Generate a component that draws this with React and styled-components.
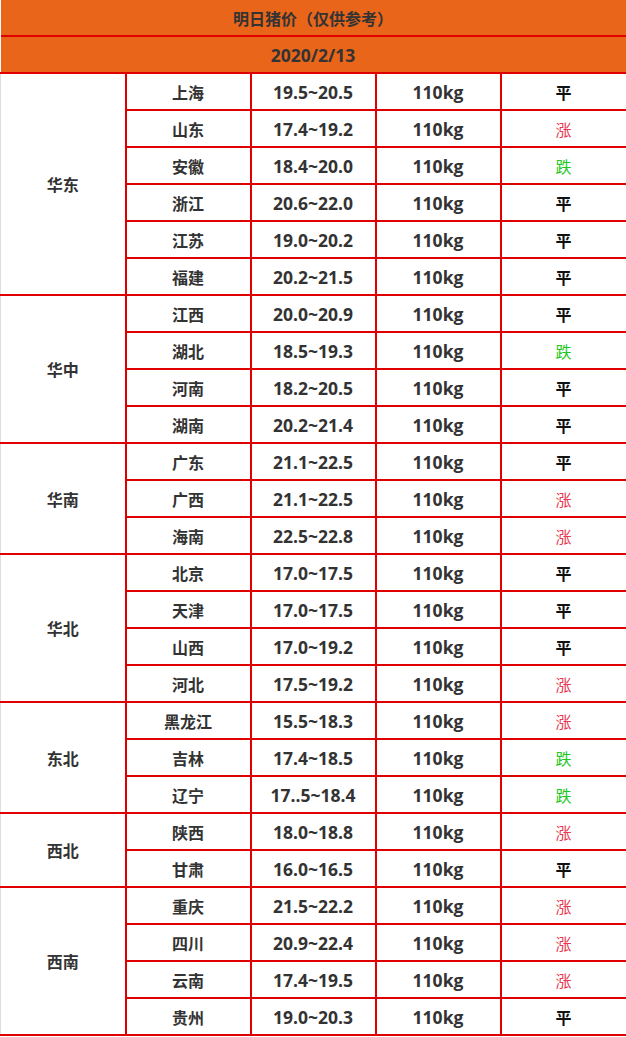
import React from "react";
import styled, { createGlobalStyle } from "styled-components";

const GlobalStyle = createGlobalStyle`
  html, body {
    margin: 0;
    padding: 0;
    background: #fff;
  }
  body {
    font-family: "Open Sans", "Noto Sans CJK SC", sans-serif;
  }
`;

const Table = styled.table`
  width: 626px;
  table-layout: fixed;
  border-collapse: collapse;
  color: #333;
`;

const Col = styled.col`
  width: ${(p) => (p.wide ? "126px" : "125px")};
`;

const HeadCell = styled.th`
  height: 35px;
  padding: 0;
  background: #e9651a;
  border-bottom: 2px solid #e00000;
  border-right: 2px solid #e00000;
  font-size: ${(p) => (p.num ? "17.5px" : "16px")};
  font-weight: 700;
  text-align: center;
  color: #333;
`;

const Cell = styled.td`
  height: 35px;
  padding: 0;
  border: 2px solid #e00000;
  border-left: ${(p) => (p.first ? "1px solid #ddd" : "2px solid #e00000")};
  font-size: ${(p) => (p.num ? "17.5px" : "16px")};
  font-weight: 700;
  text-align: center;
  white-space: nowrap;
`;

const Trend = styled(Cell)`
  font-weight: ${(p) => (p.kind === "平" ? 700 : 400)};
  color: ${(p) =>
    p.kind === "涨" ? "#e8374f" : p.kind === "跌" ? "#1ec81e" : "#111"};
`;

const regions = [
  {
    name: "华东",
    rows: [
      ["上海", "19.5~20.5", "平"],
      ["山东", "17.4~19.2", "涨"],
      ["安徽", "18.4~20.0", "跌"],
      ["浙江", "20.6~22.0", "平"],
      ["江苏", "19.0~20.2", "平"],
      ["福建", "20.2~21.5", "平"],
    ],
  },
  {
    name: "华中",
    rows: [
      ["江西", "20.0~20.9", "平"],
      ["湖北", "18.5~19.3", "跌"],
      ["河南", "18.2~20.5", "平"],
      ["湖南", "20.2~21.4", "平"],
    ],
  },
  {
    name: "华南",
    rows: [
      ["广东", "21.1~22.5", "平"],
      ["广西", "21.1~22.5", "涨"],
      ["海南", "22.5~22.8", "涨"],
    ],
  },
  {
    name: "华北",
    rows: [
      ["北京", "17.0~17.5", "平"],
      ["天津", "17.0~17.5", "平"],
      ["山西", "17.0~19.2", "平"],
      ["河北", "17.5~19.2", "涨"],
    ],
  },
  {
    name: "东北",
    rows: [
      ["黑龙江", "15.5~18.3", "涨"],
      ["吉林", "17.4~18.5", "跌"],
      ["辽宁", "17..5~18.4", "跌"],
    ],
  },
  {
    name: "西北",
    rows: [
      ["陕西", "18.0~18.8", "涨"],
      ["甘肃", "16.0~16.5", "平"],
    ],
  },
  {
    name: "西南",
    rows: [
      ["重庆", "21.5~22.2", "涨"],
      ["四川", "20.9~22.4", "涨"],
      ["云南", "17.4~19.5", "涨"],
      ["贵州", "19.0~20.3", "平"],
    ],
  },
];

const App = () => (
  <>
    <GlobalStyle />
    <Table>
      <colgroup>
        <Col />
        <Col />
        <Col />
        <Col />
        <Col wide />
      </colgroup>
      <thead>
        <tr>
          <HeadCell colSpan={5}>明日猪价（仅供参考）</HeadCell>
        </tr>
        <tr>
          <HeadCell num colSpan={5}>
            2020/2/13
          </HeadCell>
        </tr>
      </thead>
      <tbody>
        {regions.map((r) =>
          r.rows.map(([city, price, trend], i) => (
            <tr key={r.name + city}>
              {i === 0 && (
                <Cell first rowSpan={r.rows.length}>
                  {r.name}
                </Cell>
              )}
              <Cell>{city}</Cell>
              <Cell num>{price}</Cell>
              <Cell num>110kg</Cell>
              <Trend kind={trend}>{trend}</Trend>
            </tr>
          ))
        )}
      </tbody>
    </Table>
  </>
);

export default App;
